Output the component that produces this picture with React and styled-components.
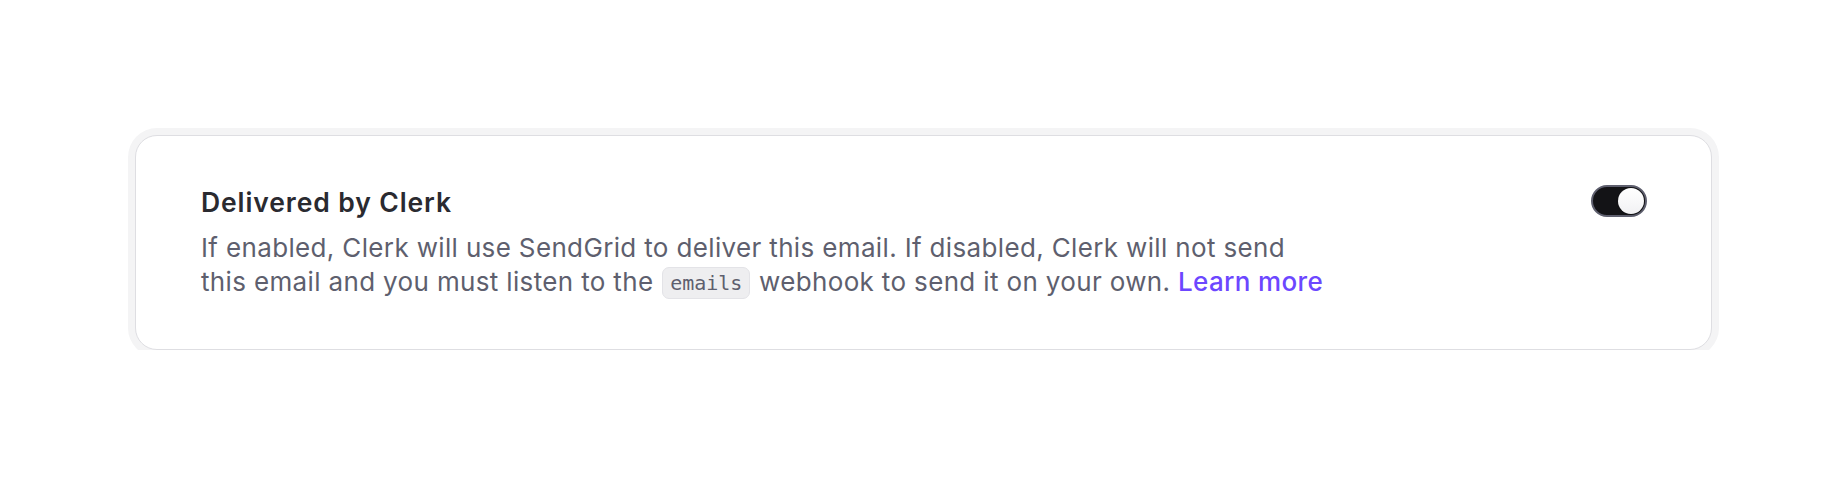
import React from "react";
import styled, { createGlobalStyle } from "styled-components";

const Global = createGlobalStyle`
  html, body { margin: 0; padding: 0; background: #ffffff; }
  body { font-family: Inter, "Noto Sans", sans-serif; -webkit-font-smoothing: antialiased; }
`;

const Page = styled.div`
  padding: 135px 135px 0 135px;
`;

const Card = styled.section`
  display: flex;
  align-items: flex-start;
  justify-content: space-between;
  gap: 40px;
  background: #ffffff;
  border: 1px solid #dedee2;
  border-radius: 22px;
  box-shadow: 0 0 0 7px #f4f4f5, 0 2px 2px rgba(0, 0, 0, 0.04);
  padding: 50px 64px 50px 65px;
`;

const TextBlock = styled.div`
  display: flex;
  flex-direction: column;
  max-width: 1200px;
`;

const Title = styled.h3`
  margin: 0;
  font-size: 26.5px;
  line-height: 33px;
  font-weight: 600;
  color: #2a2a30;
  letter-spacing: 0.9px;
`;

const Description = styled.p`
  margin: 12px 0 0 0;
  font-size: 26px;
  line-height: 34px;
  font-weight: 400;
  color: #5e5f6e;
  letter-spacing: 0.35px;
  white-space: nowrap;
`;

const Code = styled.code`
  display: inline-block;
  font-family: "DejaVu Sans Mono", "Liberation Mono", monospace;
  font-size: 20px;
  line-height: 30px;
  letter-spacing: 0;
  padding: 0 7px;
  margin: 0 1px;
  background: #eeeef0;
  border: 1px solid #e3e3e7;
  border-radius: 7px;
  color: #5e5f6e;
  vertical-align: 1px;
`;

const Link = styled.a`
  color: #6c47ff;
  text-decoration: none;
  font-weight: 500;
`;

const Switch = styled.button`
  flex: none;
  position: relative;
  width: 56px;
  height: 32px;
  margin-top: -1px;
  padding: 0;
  border: 2px solid #5e5f6e;
  border-radius: 16px;
  background: #131316;
  cursor: pointer;
`;

const Thumb = styled.span`
  position: absolute;
  top: 1px;
  right: 1px;
  width: 26px;
  height: 26px;
  border-radius: 50%;
  background: linear-gradient(180deg, #ffffff 0%, #f1f1f3 100%);
  box-shadow: 0 1px 2px rgba(0, 0, 0, 0.2);
`;

export default function App() {
  return (
    <>
      <Global />
      <Page>
        <Card>
          <TextBlock>
            <Title>Delivered by Clerk</Title>
            <Description>
              If enabled, Clerk will use SendGrid to deliver this email. If disabled, Clerk will not send
              <br />
              this email and you must listen to the <Code>emails</Code> webhook to send it on your own.{" "}
              <Link href="#">Learn more</Link>
            </Description>
          </TextBlock>
          <Switch aria-label="Delivered by Clerk" role="switch" aria-checked="true">
            <Thumb />
          </Switch>
        </Card>
      </Page>
    </>
  );
}
